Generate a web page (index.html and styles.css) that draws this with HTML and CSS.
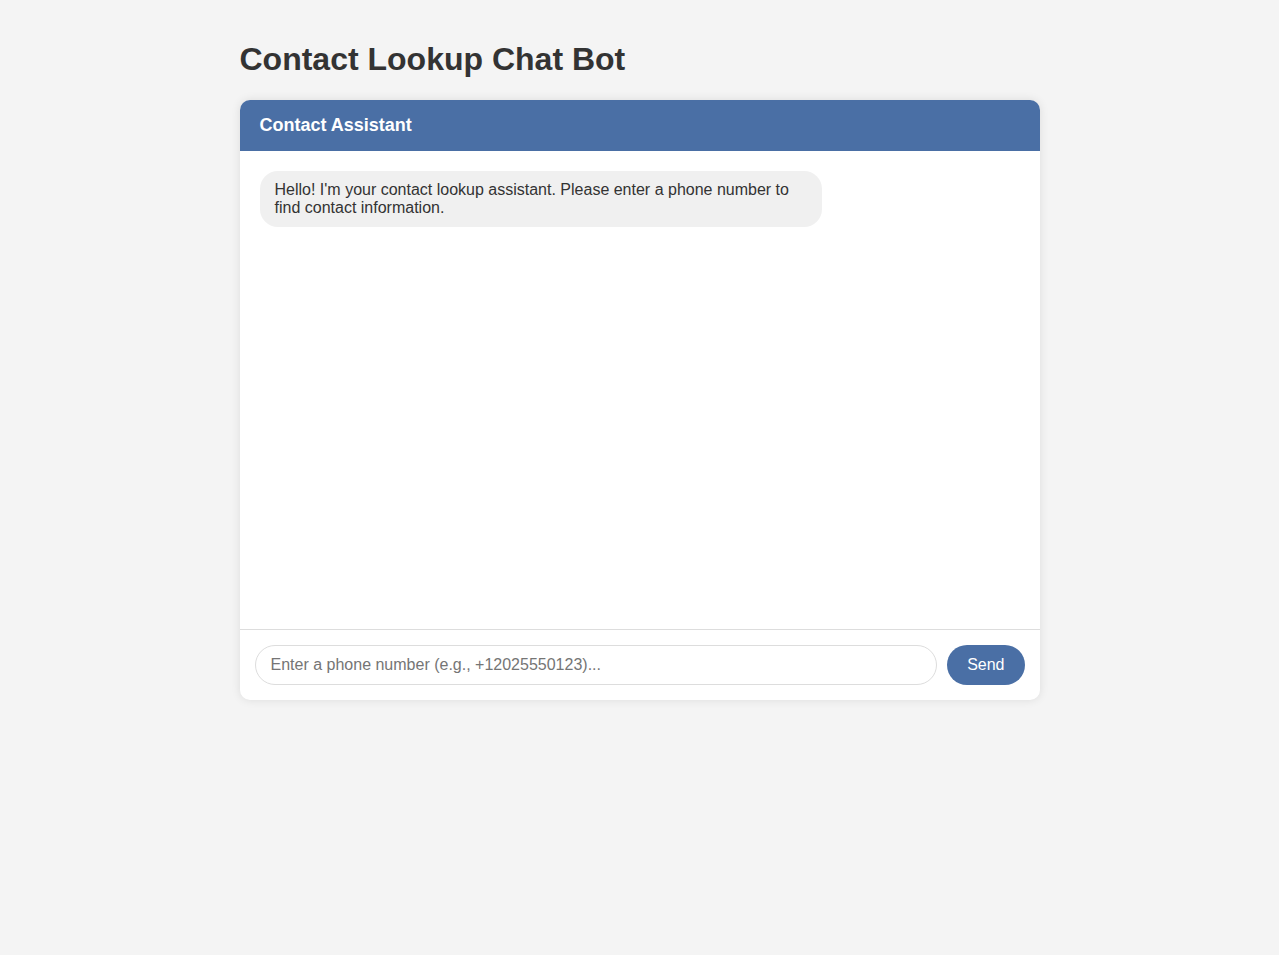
FILE: index.html
```html
<!DOCTYPE html>
<html lang="en">
<head>
<meta charset="utf-8">
<title>Contact Lookup Chat Bot</title>
<link rel="stylesheet" href="styles.css">
</head>
<body>
<div class="page">
  <h1 class="title">Contact Lookup Chat Bot</h1>
  <div class="chat">
    <div class="chat-header">Contact Assistant</div>
    <div class="messages">
      <div class="message bot">Hello! I'm your contact lookup assistant. Please enter a phone number to find contact information.</div>
    </div>
    <div class="input-area">
      <input class="phone-input" type="text" placeholder="Enter a phone number (e.g., +12025550123)...">
      <button class="send-btn">Send</button>
    </div>
  </div>
</div>
</body>
</html>
```

FILE: styles.css
```css
* { box-sizing: border-box; }
body {
  margin: 0;
  background: #f4f4f4;
  font-family: "Liberation Sans", Arial, sans-serif;
  color: #333;
}
.page {
  max-width: 800px;
  margin: 0 auto;
  padding: 20px 0;
}
.title {
  font-size: 32px;
  font-weight: bold;
  margin: 21.44px 0;
  color: #333;
}
.chat {
  background: #fff;
  border-radius: 10px;
  box-shadow: 0 0 10px rgba(0,0,0,0.1);
  height: 600px;
  display: flex;
  flex-direction: column;
  overflow: hidden;
}
.chat-header {
  background: #4a6fa5;
  color: #fff;
  padding: 15px 20px;
  font-size: 18px;
  font-weight: bold;
}
.messages {
  flex: 1;
  padding: 20px;
  overflow-y: auto;
  display: flex;
  flex-direction: column;
  align-items: flex-start;
}
.message {
  box-sizing: content-box;
  max-width: 70%;
  padding: 10px 15px;
  border-radius: 18px;
  font-size: 16px;
  line-height: 18px;
}
.message.bot {
  background: #f0f0f0;
  color: #333;
}
.input-area {
  border-top: 1px solid #ddd;
  padding: 15px;
  display: flex;
  gap: 10px;
}
.phone-input {
  flex: 1;
  height: 40px;
  padding: 10px 15px;
  border: 1px solid #ddd;
  border-radius: 20px;
  font-family: "Liberation Sans", Arial, sans-serif;
  font-size: 16px;
  color: #333;
  outline: none;
}
.phone-input::placeholder { color: #757575; }
.send-btn {
  height: 40px;
  padding: 10px 20px;
  background: #4a6fa5;
  color: #fff;
  border: none;
  border-radius: 20px;
  font-family: "Liberation Sans", Arial, sans-serif;
  font-size: 16px;
  cursor: pointer;
}
```
